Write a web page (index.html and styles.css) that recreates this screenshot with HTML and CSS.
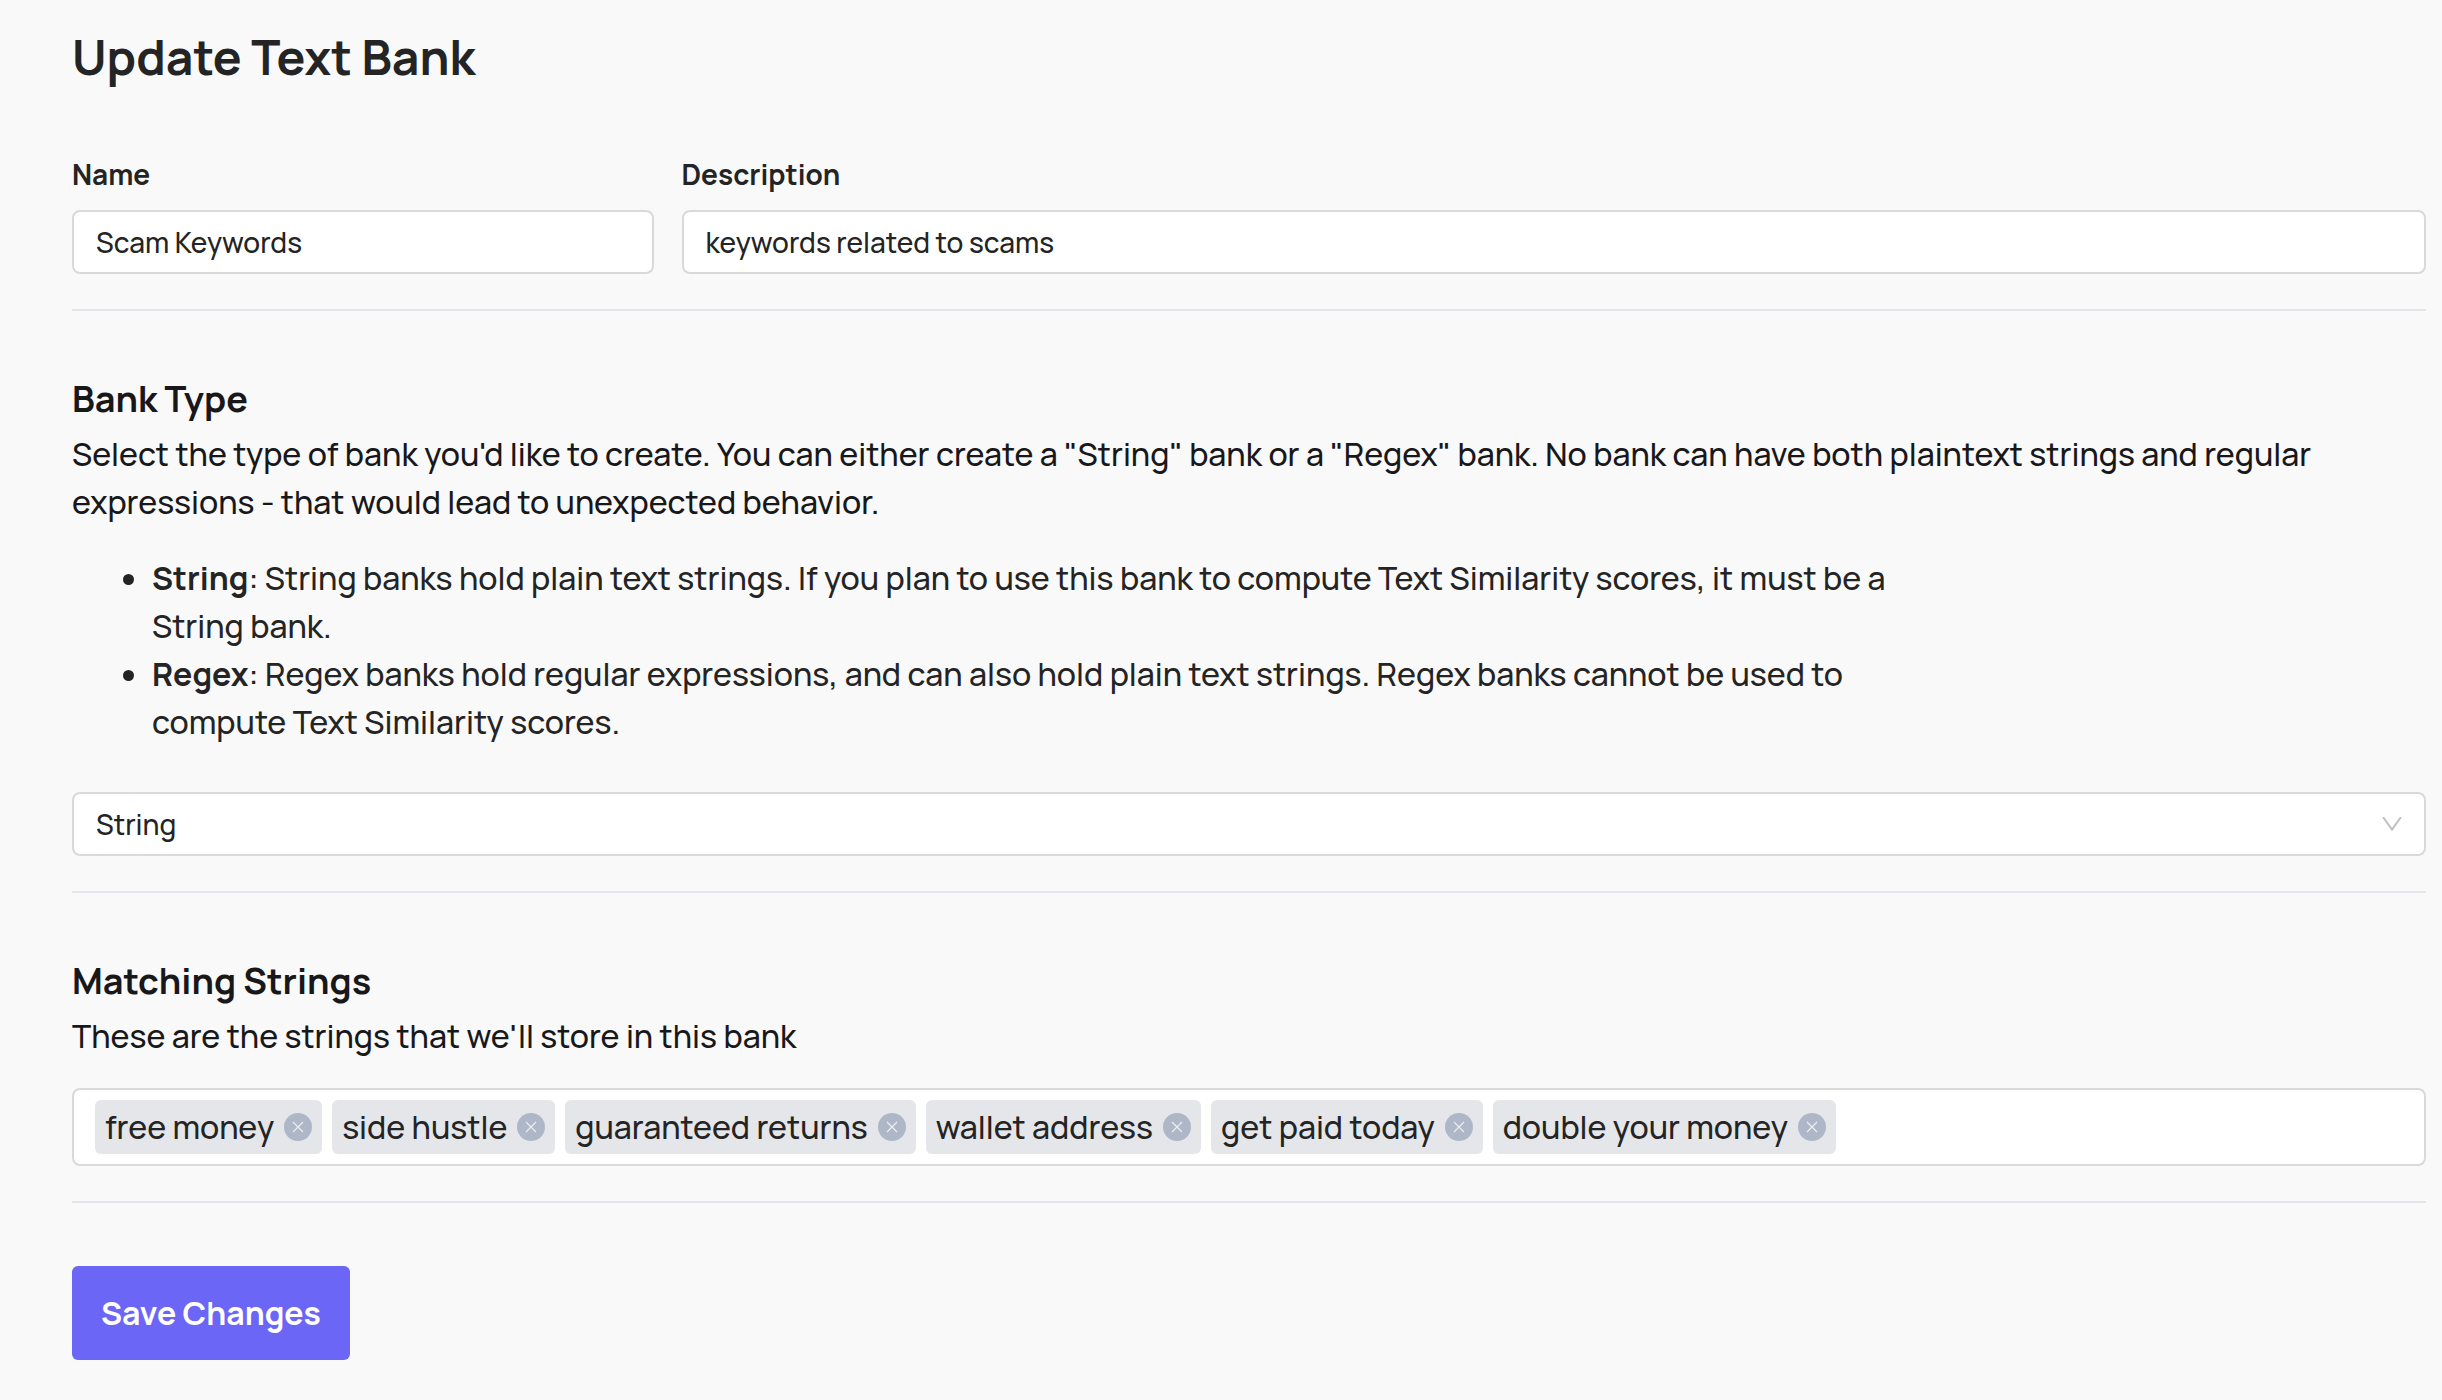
FILE: index.html
```html
<!DOCTYPE html>
<html lang="en">
  <head>
    <meta charset="UTF-8" />
    <meta name="viewport" content="width=device-width, initial-scale=1.0" />
    <title>Update Text Bank</title>
    <link rel="stylesheet" href="styles.css">
  </head>
  <body>
    <svg class="sprite" aria-hidden="true">
      <symbol id="remove" viewBox="0 0 28 28">
        <circle cx="14" cy="14" r="14" fill="#adb7c7" />
        <path d="M9 9l10 10M19 9L9 19" stroke="#eceef2" stroke-width="1.2" fill="none" />
      </symbol>
    </svg>
    <form class="container">
      <h1>Update Text Bank</h1>

      <div class="fields">
        <div class="field">
          <label for="name">Name</label>
          <input type="text" id="name" name="name" value="Scam Keywords" />
        </div>
        <div class="field">
          <label for="description">Description</label>
          <input
            type="text"
            id="description"
            name="description"
            value="keywords related to scams"
          />
        </div>
      </div>

      <hr />

      <section>
        <h2 id="typeHeading">Bank Type</h2>
        <p>
          Select the type of bank you'd like to create. You can either create a
          "String" bank or a "Regex" bank. No bank can have both plaintext
          strings and regular expressions - that would lead to unexpected
          behavior.
        </p>
        <ul class="types">
          <li>
            <b>String</b>: String banks hold plain text strings. If you plan to
            use this bank to compute Text Similarity scores, it must be a String
            bank.
          </li>
          <li>
            <b>Regex</b>: Regex banks hold regular expressions, and can also
            hold plain text strings. Regex banks cannot be used to compute Text
            Similarity scores.
          </li>
        </ul>
        <div class="select">
          <select id="type" name="type" aria-labelledby="typeHeading">
            <option value="string">String</option>
            <option value="regex">Regex</option>
          </select>
          <svg class="chevron" viewBox="0 0 20 14" aria-hidden="true">
            <path d="M1 0l9 12.500L19 0" />
          </svg>
        </div>
      </section>

      <hr />

      <section>
        <h2 id="stringsHeading">Matching Strings</h2>
        <p>These are the strings that we'll store in this bank</p>
        <div class="tags">
          <span class="tag">free money<button type="button" aria-label="Remove free money"><svg><use href="#remove" /></svg></button></span>
          <span class="tag">side hustle<button type="button" aria-label="Remove side hustle"><svg><use href="#remove" /></svg></button></span>
          <span class="tag">guaranteed returns<button type="button" aria-label="Remove guaranteed returns"><svg><use href="#remove" /></svg></button></span>
          <span class="tag">wallet address<button type="button" aria-label="Remove wallet address"><svg><use href="#remove" /></svg></button></span>
          <span class="tag">get paid today<button type="button" aria-label="Remove get paid today"><svg><use href="#remove" /></svg></button></span>
          <span class="tag">double your money<button type="button" aria-label="Remove double your money"><svg><use href="#remove" /></svg></button></span>
          <input type="text" id="strings" class="tag-input" aria-labelledby="stringsHeading" />
        </div>
      </section>

      <hr />

      <button type="submit" class="save">Save Changes</button>
    </form>
  </body>
</html>
```

FILE: styles.css
```css
* {
  box-sizing: border-box;
}
body {
  font-family: Manrope, Inter, sans-serif;
  font-size: 32px;
  line-height: 48px;
  font-weight: 500;
  color: #242424;
  background-color: #f9f9f9;
  margin: 0;
}
.sprite {
  display: none;
}
.container {
  padding: 21px 16px 40px 72px;
}
h1 {
  font-size: 48px;
  line-height: 72px;
  font-weight: 700;
  margin: 0 0 60px;
}
h2 {
  font-size: 36px;
  line-height: 54px;
  font-weight: 700;
  color: #18181b;
  margin: 0 0 4px;
}
p {
  color: #18181b;
  margin: 0 0 28px;
}
hr {
  border: none;
  border-top: 2px solid #e2e6eb;
  margin: 35px 0 61px;
}
b {
  font-weight: 700;
}
.fields {
  display: grid;
  grid-template-columns: 1fr 3fr;
  gap: 28px;
}
.field {
  display: flex;
  flex-direction: column;
  gap: 15px;
}
label {
  font-size: 28px;
  line-height: 42px;
  font-weight: 700;
}
input,
select {
  width: 100%;
  height: 64px;
  padding: 0 22px;
  font-family: inherit;
  font-size: 28px;
  font-weight: 500;
  color: #242424;
  background-color: white;
  border: 2px solid #d9d9d9;
  border-radius: 8px;
}
.types {
  max-width: 1820px;
  margin: 0 0 46px;
  padding-left: 80px;
}
.select {
  display: grid;
  align-items: center;
}
.select > * {
  grid-area: 1 / 1;
}
select {
  appearance: none;
}
.chevron {
  justify-self: end;
  width: 20px;
  height: 14px;
  margin-right: 24px;
  fill: none;
  stroke: #bfbfbf;
  stroke-width: 2;
  pointer-events: none;
}
.tags {
  display: flex;
  flex-wrap: wrap;
  gap: 10px;
  padding: 10px 21px;
  background-color: white;
  border: 2px solid #d9d9d9;
  border-radius: 8px;
}
.tag {
  display: flex;
  align-items: center;
  gap: 10px;
  height: 54px;
  padding: 0 10px;
  background-color: #e5e6ea;
  border-radius: 6px;
}
.tag button {
  display: flex;
  padding: 0;
  background: none;
  border: none;
  cursor: pointer;
}
.tag svg {
  width: 28px;
  height: 28px;
}
.tag-input {
  flex: 1;
  width: auto;
  height: 54px;
  padding: 0;
  border: none;
  outline: none;
}
.save {
  margin-top: 2px;
  padding: 23px 29px;
  font-family: inherit;
  font-size: 32px;
  line-height: 48px;
  font-weight: 700;
  color: white;
  background-color: #6c66f6;
  border: none;
  border-radius: 6px;
  cursor: pointer;
}
.save:hover {
  background-color: #5a54e0;
}
```
